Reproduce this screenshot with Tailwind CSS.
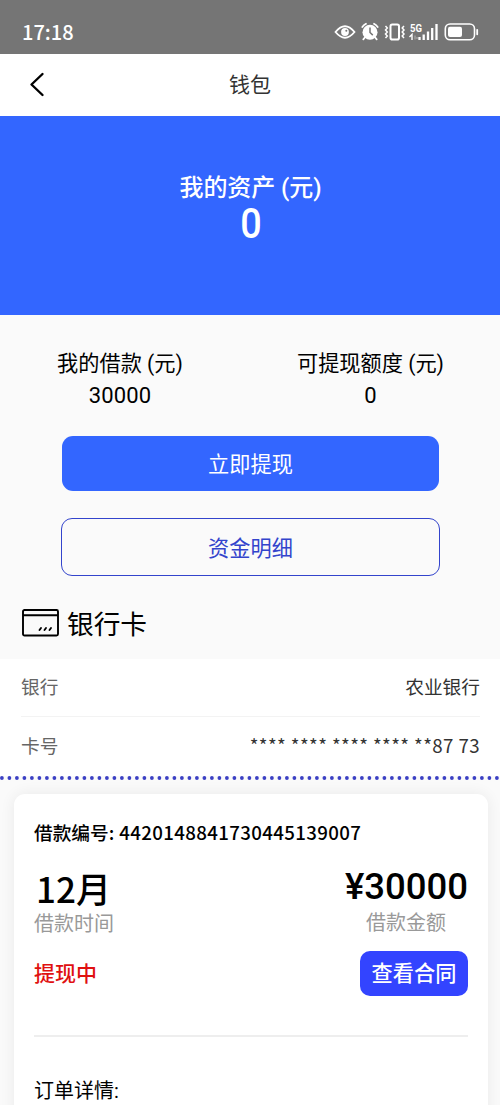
<!DOCTYPE html>
<html lang="zh-CN">
<head>
<meta charset="utf-8">
<title>钱包</title>
<script src="https://cdn.jsdelivr.net/npm/@tailwindcss/browser@4"></script>
</head>
<body class="w-[500px] h-[1105px] overflow-hidden bg-[#fafafa] text-black font-[Roboto,'Noto_Sans_CJK_SC',sans-serif]">
<div class="flex flex-col h-[1105px] overflow-hidden">
  <div class="h-[54px] shrink-0 bg-[#757575] flex items-center justify-between pl-[22px] pr-[21px] pt-[10px] text-white">
    <span class="text-[20px] leading-6 font-medium font-['Noto_Sans_CJK_SC',sans-serif]">17:18</span>
    <svg width="146" height="24" viewBox="333 20 146 24" fill="none" stroke="#fff">
      <path d="M335.500 32Q345 20.500 354.500 32Q345 43.500 335.500 32Z" stroke-width="1.8"/>
      <circle cx="345" cy="32" r="3.900" fill="#fff" stroke="none"/><circle cx="346.300" cy="30.700" r="1" fill="#757575" stroke="none"/>
      <circle cx="370" cy="32.300" r="7.500" fill="#fff" stroke="none"/>
      <path d="M362.300 27a11 11 0 0 1 3.700-3.200M377.700 27a11 11 0 0 0-3.700-3.200M364.800 37.500l-1.500 1.800M375.200 37.500l1.500 1.800" stroke-width="1.800" stroke-linecap="round"/>
      <path d="M370 27.500v5l2.800 2.600" stroke="#757575" stroke-width="1.500"/>
      <rect x="390.500" y="24.500" width="8.500" height="15" rx="1.800" stroke-width="2"/>
      <path d="M385.500 26l1.800 2-1.800 2 1.800 2-1.800 2 1.800 2-1.800 2M404 26l-1.800 2 1.800 2-1.800 2 1.800 2-1.800 2 1.800 2" stroke-width="1.500"/>
      <text x="410" y="32" font-size="11" font-weight="700" fill="#fff" stroke="none" textLength="12" lengthAdjust="spacingAndGlyphs">5G</text>
      <path d="M409.500 37l2.500-2.500v5.500" stroke-width="1.400"/><path d="M415 35.500v4M417 37v2" stroke="#b5b5b5" stroke-width="1"/>
      <path d="M419.500 37v3M423.700 34.500v5.500M428 31.500v8.500M432.200 28v12M436.500 24v16" stroke-width="2.300"/>
      <rect x="445.300" y="24" width="29.200" height="15.800" rx="4.800" stroke-width="1.600"/>
      <rect x="448" y="26.700" width="14" height="10.400" rx="2" fill="#fff" stroke="none"/>
      <path d="M477.200 29.800v4.500" stroke-width="1.800" stroke-linecap="round"/>
    </svg>
  </div>
  <div class="h-[62px] shrink-0 bg-white grid grid-cols-[1fr_auto_1fr] items-center">
    <svg class="ml-[28px]" width="20" height="28" viewBox="0 0 20 28" fill="none" stroke="#000" stroke-width="2.400" stroke-linecap="round" stroke-linejoin="round"><path d="M14.500 3L3.500 13.500l11 10.500"/></svg>
    <h1 class="text-[21px] leading-8 text-[#333]">钱包</h1>
    <span></span>
  </div>
  <div class="h-[199px] shrink-0 bg-[#3366ff] text-white text-center pt-[56px] pl-px">
    <div class="text-[24px] leading-8 font-medium tracking-[-0.1px]">我的资产 (元)</div>
    <div class="text-[42px] leading-[40px] font-medium"><span class="inline-block scale-x-90">0</span></div>
  </div>
  <div class="h-[121px] shrink-0 flex pt-[33px] text-center">
    <div class="w-[240px]"><div class="text-[21.200px] leading-8">我的借款 (元)</div><div class="text-[22px] leading-8 tracking-[0.1px]">30000</div></div>
    <div class="flex-1 pl-px"><div class="text-[21.200px] leading-8">可提现额度 (元)</div><div class="text-[22px] leading-8">0</div></div>
  </div>
  <div class="shrink-0 pl-[61px] pr-[60px] flex flex-col gap-[27px] text-[21.200px]">
    <div class="mx-[1px] h-[55px] rounded-[11px] bg-[#3366ff] text-white flex items-center justify-center pt-[2px]">立即提现</div>
    <div class="h-[58px] rounded-[11px] border border-[#3344cc] text-[#3344cc] flex items-center justify-center pt-[3px]">资金明细</div>
  </div>
  <div class="h-[83px] shrink-0 flex items-center pl-[22px] pt-[10px] gap-[8px]">
    <svg width="37" height="28" viewBox="0 0 37 28" fill="none" stroke="#000" stroke-width="1.900"><rect x="1" y="1" width="35" height="25.500" rx="1.500"/><path d="M1 6.300h35"/><path d="M17.500 21l1.500-2M22.500 21l1.500-2M27.500 21l1.500-2" stroke-linecap="round"/></svg>
    <h2 class="text-[26.700px] leading-9 pt-[4px]">银行卡</h2>
  </div>
  <div class="h-[117px] shrink-0 bg-white pl-[21px] pr-[20px] text-[18.700px]">
    <div class="h-[58px] flex items-center justify-between border-b border-[#f3f3f3] pt-[2px]"><span class="text-[#666]">银行</span><span class="text-[#333]">农业银行</span></div>
    <div class="h-[59px] flex items-center justify-between"><span class="text-[#666] pt-[2px]">卡号</span><span class="text-[#333] font-['Noto_Sans_CJK_SC',sans-serif] tracking-[0.400px] -mt-[2px]">**** **** **** **** **87 73</span></div>
  </div>
  <svg class="shrink-0 block" width="500" height="4" viewBox="0 0 500 4"><path d="M1.900 2H500" stroke="#3b40c4" stroke-width="3.800" stroke-linecap="round" stroke-dasharray="0 7.500"/></svg>
  <div class="shrink-0 mt-[14px] ml-[14px] mr-[12px] h-[340px] rounded-[11px] bg-white shadow-[0_0_15px_rgba(0,0,0,0.07)] px-[20px] pt-[22px]">
    <div class="text-[18.700px] leading-8 font-medium font-['Noto_Sans_CJK_SC',sans-serif]">借款编号:<span class="ml-[5px] tracking-[0.350px]">4420148841730445139007</span></div>
    <div class="flex justify-between mt-[19px]">
      <div><div class="text-[35px] leading-[42px] font-medium font-['Noto_Sans_CJK_SC',sans-serif] pl-[2px]">12月</div><div class="text-[20px] leading-[30px] text-[#999]">借款时间</div></div>
      <div class="flex flex-col items-end"><div class="text-[36.500px] leading-[40px] font-medium">¥30000</div><div class="text-[20px] leading-[32px] text-[#999] pr-[22px]">借款金额</div></div>
    </div>
    <div class="flex justify-between items-center mt-[12px] h-[44px]">
      <span class="text-[21px] font-medium text-[#e01010] pt-[3px]">提现中</span>
      <span class="w-[108px] h-[45px] rounded-[10px] bg-[#3344ff] text-white text-[21.200px] font-medium flex items-center justify-center pt-[2px]">查看合同</span>
    </div>
    <div class="mt-[40px] border-t-2 border-[#eee]"></div>
    <div class="mt-[38px] text-[20px] leading-8">订单详情:</div>
  </div>
</div>
</body>
</html>
